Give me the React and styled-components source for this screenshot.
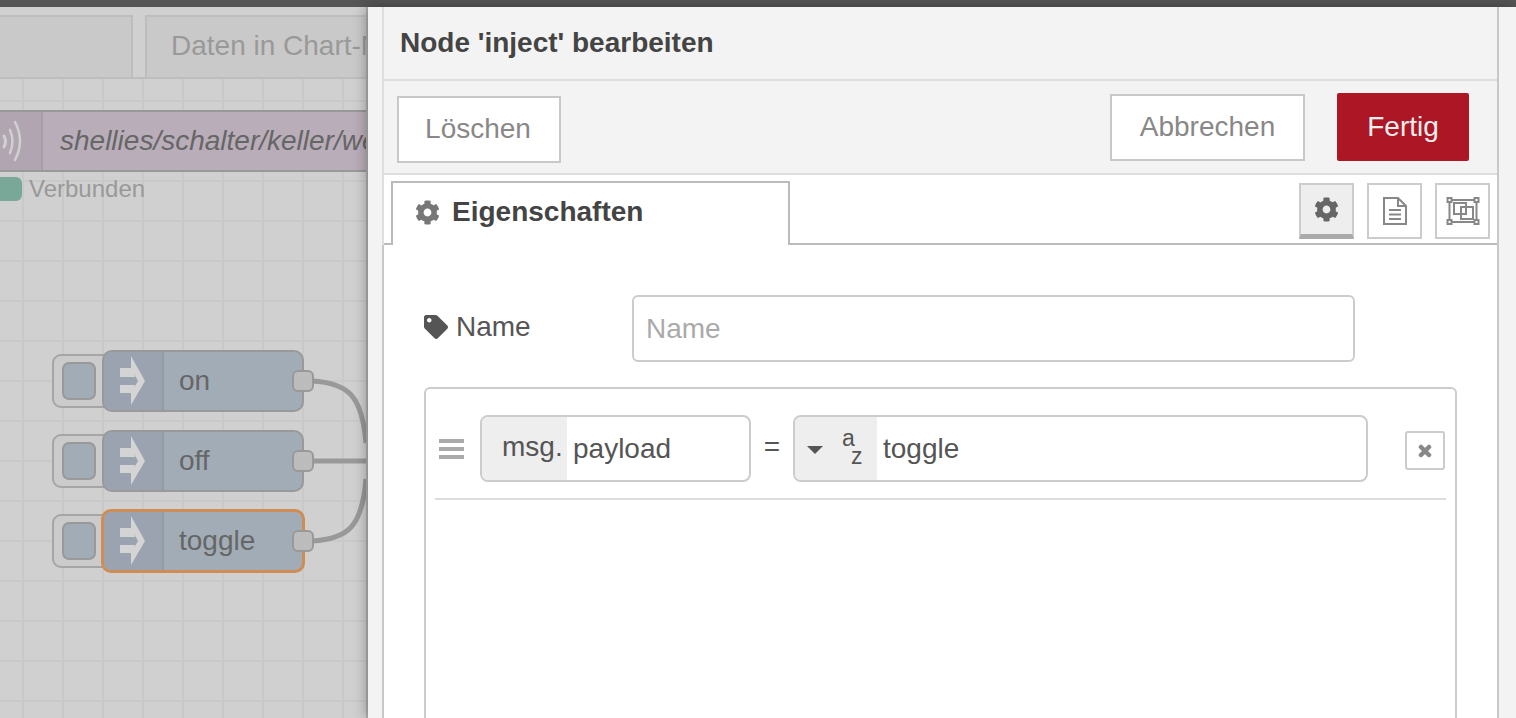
import React from 'react';
import styled, { createGlobalStyle } from 'styled-components';
import { FaCog, FaTag } from 'react-icons/fa';

const GlobalStyle = createGlobalStyle`
  html, body {
    margin: 0;
    padding: 0;
    height: 100%;
    overflow: hidden;
    font-family: 'Liberation Sans', Arial, sans-serif;
  }
`;

const Page = styled.div`
  width: 1516px;
  height: 718px;
  overflow: hidden;
  display: flex;
  flex-direction: column;
`;
const TopBar = styled.div`
  height: 7px;
  flex: none;
  background: #555;
`;
const Main = styled.div`
  flex: 1;
  display: flex;
  min-height: 0;
  background: #b4b4b4;
`;

/* left side: the dimmed workspace */
const Workspace = styled.div`
  position: relative;
  width: 366px;
  flex: none;
  overflow: hidden;
  background-color: #d0d0d0;
  background-image:
    linear-gradient(to right, #c9c9c9 2px, transparent 2px),
    linear-gradient(to bottom, #c9c9c9 2px, transparent 2px);
  background-size: 40px 40px;
  background-position: 22px 13px;
`;
const TabBar = styled.div`
  height: 62px;
  padding-top: 8px;
  margin-left: -20px;
  display: flex;
  gap: 12px;
  background: #d0d0d0;
  border-bottom: 2px solid #bdbdbd;
`;
const FlowTab = styled.div`
  flex: none;
  box-sizing: border-box;
  width: ${p => p.$width}px;
  height: 62px;
  padding-left: 24px;
  background: #c9c9c9;
  border: 2px solid #bdbdbd;
  border-bottom: none;
  color: #999;
  font-size: 28px;
  line-height: 58px;
  white-space: nowrap;
`;
const WireLayer = styled.svg`
  position: absolute;
  left: 0;
  top: 0;
  width: 366px;
  height: 711px;
`;
const MqttNode = styled.div`
  position: absolute;
  left: -10px;
  top: 103px;
  width: 400px;
  height: 62px;
  box-sizing: border-box;
  display: flex;
  background: #b9adb9;
  border-top: 2px solid #999;
  border-bottom: 2px solid #999;
`;
const MqttIcon = styled.div`
  width: 53px;
  flex: none;
  background: #b1a5b1;
  border-right: 2px solid #a99daa;
  box-sizing: border-box;
  display: flex;
  align-items: center;
  justify-content: flex-end;
  padding-right: 18px;
`;
const MqttLabel = styled.div`
  padding-left: 17px;
  font-size: 28px;
  font-style: italic;
  line-height: 58px;
  color: #666;
  white-space: nowrap;
`;
const Status = styled.div`
  position: absolute;
  left: -10px;
  top: 168px;
  display: flex;
  align-items: center;
  gap: 7px;
  color: #999;
  font-size: 24px;
`;
const StatusDot = styled.div`
  width: 32px;
  height: 24px;
  border-radius: 6px;
  background: #7aa898;
`;
const InjectButton = styled.div`
  position: absolute;
  left: 52px;
  top: ${p => p.$top + 4}px;
  width: 62px;
  height: 54px;
  box-sizing: border-box;
  background: #cbcbcb;
  border: 2px solid #a5a5a5;
  border-radius: 9px;
`;
const InjectInner = styled.div`
  position: absolute;
  left: 8px;
  top: 6px;
  width: 34px;
  height: 38px;
  box-sizing: border-box;
  background: #a2acb6;
  border: 2px solid #999;
  border-radius: 7px;
`;
const FlowNode = styled.div`
  position: absolute;
  left: ${p => (p.$selected ? 101 : 102)}px;
  top: ${p => (p.$selected ? p.$top - 1 : p.$top)}px;
  width: ${p => (p.$selected ? 204 : 202)}px;
  height: ${p => (p.$selected ? 64 : 62)}px;
  box-sizing: border-box;
  display: flex;
  overflow: hidden;
  background: #a2acb6;
  border: ${p => (p.$selected ? '3px solid #cf8d53' : '2px solid #999')};
  border-radius: 10px;
`;
const FlowIcon = styled.div`
  flex: none;
  width: 60px;
  box-sizing: border-box;
  background: #9aa3af;
  border-right: 2px solid #929ba7;
  display: flex;
  align-items: center;
  padding-left: 16px;
`;
const FlowLabel = styled.div`
  padding-left: 15px;
  font-size: 28px;
  line-height: 58px;
  color: #666;
`;
const Port = styled.div`
  position: absolute;
  left: 292px;
  top: ${p => p.$top + 20}px;
  width: 22px;
  height: 22px;
  box-sizing: border-box;
  background: #bcbcbc;
  border: 2px solid #999;
  border-radius: 6px;
`;

/* right side: the edit tray */
const Tray = styled.div`
  flex: 1;
  position: relative;
  margin-left: 2px;
  display: flex;
  background: #f3f3f3;
  padding: 0 17px 0 14px;
  box-shadow: -2px 0 12px rgba(0, 0, 0, 0.3);
`;
const TrayInner = styled.div`
  flex: 1;
  min-width: 0;
  display: flex;
  flex-direction: column;
  border-left: 2px solid #ddd;
  border-right: 2px solid #c8c8c8;
`;
const TrayHeader = styled.div`
  height: 74px;
  flex: none;
  box-sizing: border-box;
  padding-left: 16px;
  font-size: 28px;
  font-weight: bold;
  line-height: 71px;
  color: #444;
  border-bottom: 2px solid #ddd;
`;
const Toolbar = styled.div`
  height: 94px;
  flex: none;
  box-sizing: border-box;
  display: flex;
  align-items: center;
  padding: 0 28px 0 13px;
  border-bottom: 2px solid #ddd;
`;
const Button = styled.div`
  box-sizing: border-box;
  flex: none;
  width: ${p => p.$width}px;
  height: 67px;
  display: flex;
  align-items: center;
  justify-content: center;
  background: #fff;
  border: 2px solid #c8c8c8;
  color: #888;
  font-size: 28px;
`;
const DeleteButton = styled(Button)`
  margin-top: 4px;
  margin-right: auto;
  padding-right: 2px;
`;
const CancelButton = styled(Button)`
  margin-top: 0;
`;
const DoneButton = styled(Button)`
  height: 68px;
  margin-top: 0;
  margin-left: 32px;
  background: #ad1625;
  border-color: #ad1625;
  border-radius: 2px;
  color: #eee;
`;
const TabsRow = styled.div`
  height: 70px;
  flex: none;
  box-sizing: border-box;
  display: flex;
  align-items: flex-start;
  background: #fff;
  padding: 6px 7px 0 7px;
  border-bottom: 2px solid #bbb;
`;
const EditTab = styled.div`
  box-sizing: border-box;
  width: 399px;
  height: 64px;
  margin-right: auto;
  display: flex;
  align-items: center;
  gap: 12px;
  padding: 0 0 4px 22px;
  background: #fff;
  border: 2px solid #bbb;
  border-bottom: none;
  color: #444;
  font-size: 28px;
  font-weight: bold;
`;
const IconButton = styled.div`
  box-sizing: border-box;
  width: 55px;
  height: 56px;
  margin: 2px 0 0 13px;
  display: flex;
  align-items: center;
  justify-content: center;
  color: #666;
  background: ${p => (p.$active ? '#eee' : '#fff')};
  border: 2px solid #ccc;
  border-bottom: ${p => (p.$active ? '5px solid #aaa' : '2px solid #ccc')};
`;
const TrayBody = styled.div`
  flex: 1;
  min-height: 0;
  overflow: hidden;
  background: #fff;
  margin-left: -2px;
  padding: 50px 0 0 40px;
  border-left: 2px solid #c8c8c8;
`;
const NameRow = styled.div`
  display: flex;
  align-items: center;
  height: 67px;
`;
const NameLabel = styled.div`
  width: 208px;
  flex: none;
  display: flex;
  align-items: center;
  gap: 8px;
  color: #555;
  font-size: 28px;
  margin-top: -4px;
`;
const NameInput = styled.div`
  box-sizing: border-box;
  width: 723px;
  height: 67px;
  padding-left: 12px;
  border: 2px solid #ccc;
  border-radius: 6px;
  color: #aaa;
  font-size: 28px;
  line-height: 63px;
`;
const RuleBox = styled.div`
  box-sizing: border-box;
  width: 1033px;
  height: 400px;
  margin-top: 25px;
  padding: 0 9px 0 9px;
  border: 2px solid #ccc;
  border-radius: 6px 6px 0 0;
`;
const RuleRow = styled.div`
  box-sizing: border-box;
  height: 111px;
  display: flex;
  align-items: flex-start;
  padding-top: 26px;
  border-bottom: 2px solid #ddd;
`;
const Handle = styled.div`
  flex: none;
  width: 25px;
  margin: 24px 16px 0 4px;
  display: flex;
  flex-direction: column;
  gap: 4px;
  span {
    height: 4px;
    background: #aaa;
  }
`;
const TypedInput = styled.div`
  box-sizing: border-box;
  flex: none;
  width: ${p => p.$width}px;
  height: 67px;
  display: flex;
  overflow: hidden;
  background: #fff;
  border: 2px solid #ccc;
  border-radius: 8px;
  font-size: 28px;
  color: #555;
`;
const TypeSelect = styled.div`
  flex: none;
  width: ${p => p.$width}px;
  box-sizing: border-box;
  background: #eee;
  display: flex;
  align-items: center;
`;
const MsgLabel = styled.span`
  padding-left: 20px;
  margin-top: -4px;
  white-space: nowrap;
`;
const TypeValue = styled.div`
  padding-left: 6px;
  line-height: 63px;
`;
const Equals = styled.div`
  flex: none;
  width: 42px;
  text-align: center;
  font-size: 28px;
  line-height: 64px;
  color: #555;
`;
const Caret = styled.span`
  margin: 2px 0 0 12px;
  width: 0;
  height: 0;
  border-left: 8px solid transparent;
  border-right: 8px solid transparent;
  border-top: 8px solid #555;
`;
const TypeIcon = styled.span`
  position: relative;
  margin-left: 19px;
  width: 24px;
  height: 48px;
  font-size: 23px;
  color: #555;
`;
const TypeLetter = styled.span`
  position: absolute;
  line-height: 18px;
  left: ${p => p.$left}px;
  top: ${p => p.$top}px;
`;
const RemoveButton = styled.div`
  box-sizing: border-box;
  flex: none;
  width: 40px;
  height: 39px;
  margin: 16px 0 0 37px;
  display: flex;
  align-items: center;
  justify-content: center;
  border: 2px solid #ccc;
  border-radius: 3px;
`;

const InjectGlyph = () => (
  <svg width="26" height="50" viewBox="0 0 26 50">
    <path fill="#d4d4d4" d="M11 0 L25 25 L11 49 L11 37 L18 25 L11 12 Z" />
    <path fill="#d4d4d4" d="M0 12 H13 L15 21 H0 Z M0 29 H15 L13 37 H0 Z" />
  </svg>
);

const WaveGlyph = () => (
  <svg width="22" height="50" viewBox="0 0 22 50" fill="none" stroke="#d0d0d0" strokeLinecap="round">
    <path d="M3 20 Q6 25 3 31" strokeWidth="3" />
    <path d="M9 14 Q14 25 9 37" strokeWidth="2.5" />
    <path d="M14 6 Q24 25 14 44" strokeWidth="2.5" />
  </svg>
);

const FileGlyph = () => (
  <svg width="24" height="28" viewBox="0 0 24 28" fill="none" stroke="#888" strokeWidth="2">
    <path d="M1 1 H15 L23 9 V27 H1 Z" />
    <path d="M15 1 V9 H23" />
    <path d="M6 13 H18 M6 17.5 H18 M6 22 H18" />
  </svg>
);

const ExpandGlyph = () => (
  <svg width="34" height="28" viewBox="0 0 34 28" fill="none" stroke="#888" strokeWidth="2">
    <rect x="3.5" y="3" width="27" height="22" />
    <rect x="8" y="6" width="12" height="11" />
    <rect x="15" y="10" width="12" height="12" />
    <g fill="#fff">
      <rect x="1.5" y="1" width="4" height="4" />
      <rect x="28.5" y="1" width="4" height="4" />
      <rect x="1.5" y="23" width="4" height="4" />
      <rect x="28.5" y="23" width="4" height="4" />
    </g>
  </svg>
);

const CrossGlyph = () => (
  <svg width="14" height="14" viewBox="0 0 14 14" stroke="#888" strokeWidth="4.5" strokeLinecap="round">
    <path d="M3 3 L11 11 M11 3 L3 11" />
  </svg>
);

const nodes = [
  { label: 'on', top: 343 },
  { label: 'off', top: 423 },
  { label: 'toggle', top: 503, selected: true }
];

export default function App() {
  return (
    <Page>
      <GlobalStyle />
      <TopBar />
      <Main>
        <Workspace>
          <TabBar>
            <FlowTab $width={153} />
            <FlowTab $width={300}>Daten in Chart-N</FlowTab>
          </TabBar>
          <MqttNode>
            <MqttIcon>
              <WaveGlyph />
            </MqttIcon>
            <MqttLabel>shellies/schalter/keller/we</MqttLabel>
          </MqttNode>
          <Status>
            <StatusDot />
            Verbunden
          </Status>
          <WireLayer viewBox="0 0 366 711" fill="none" stroke="#999" strokeWidth="5">
            <path d="M312 374 C348 376 362 388 366 436" />
            <path d="M312 454 H366" />
            <path d="M312 534 C348 532 362 520 366 472" />
          </WireLayer>
          {nodes.map(n => (
            <React.Fragment key={n.label}>
              <InjectButton $top={n.top}>
                <InjectInner />
              </InjectButton>
              <FlowNode $top={n.top} $selected={n.selected}>
                <FlowIcon>
                  <InjectGlyph />
                </FlowIcon>
                <FlowLabel>{n.label}</FlowLabel>
              </FlowNode>
              <Port $top={n.top} />
            </React.Fragment>
          ))}
        </Workspace>
        <Tray>
          <TrayInner>
            <TrayHeader>Node 'inject' bearbeiten</TrayHeader>
            <Toolbar>
              <DeleteButton $width={164}>Löschen</DeleteButton>
              <CancelButton $width={195}>Abbrechen</CancelButton>
              <DoneButton $width={132}>Fertig</DoneButton>
            </Toolbar>
            <TabsRow>
              <EditTab>
                <FaCog size={25} color="#777" />
                Eigenschaften
              </EditTab>
              <IconButton $active>
                <FaCog size={25} />
              </IconButton>
              <IconButton>
                <FileGlyph />
              </IconButton>
              <IconButton>
                <ExpandGlyph />
              </IconButton>
            </TabsRow>
            <TrayBody>
              <NameRow>
                <NameLabel>
                  <FaTag size={24} color="#555" />
                  Name
                </NameLabel>
                <NameInput>Name</NameInput>
              </NameRow>
              <RuleBox>
                <RuleRow>
                  <Handle>
                    <span />
                    <span />
                    <span />
                  </Handle>
                  <TypedInput $width={271}>
                    <TypeSelect $width={85}>
                      <MsgLabel>msg.</MsgLabel>
                    </TypeSelect>
                    <TypeValue>payload</TypeValue>
                  </TypedInput>
                  <Equals>=</Equals>
                  <TypedInput $width={575}>
                    <TypeSelect $width={82}>
                      <Caret />
                      <TypeIcon>
                        <TypeLetter $left={0} $top={4}>a</TypeLetter>
                        <TypeLetter $left={9} $top={22}>z</TypeLetter>
                      </TypeIcon>
                    </TypeSelect>
                    <TypeValue>toggle</TypeValue>
                  </TypedInput>
                  <RemoveButton>
                    <CrossGlyph />
                  </RemoveButton>
                </RuleRow>
              </RuleBox>
            </TrayBody>
          </TrayInner>
        </Tray>
      </Main>
    </Page>
  );
}
